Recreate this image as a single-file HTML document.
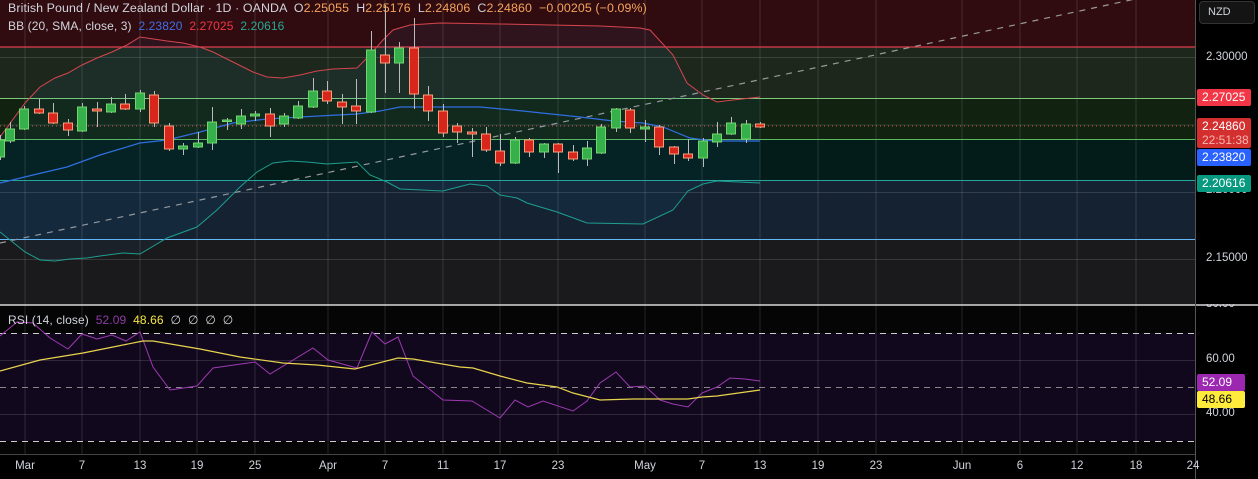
<!DOCTYPE html>
<html><head><meta charset="utf-8"><style>
html,body{margin:0;padding:0;background:#000;width:1258px;height:479px;overflow:hidden;font-family:"Liberation Sans",sans-serif}
svg{position:absolute;left:0;top:0}
.lg{position:absolute;left:8px;font-size:12px;color:#d1d4dc;white-space:nowrap;letter-spacing:0.1px}
.ax{position:absolute;left:1206px;font-size:11.5px;color:#d1d4dc}
.bx{position:absolute;left:1197px;width:54px;font-size:12px;color:#fff;padding-left:5px;box-sizing:border-box;border-radius:2px;line-height:16px;height:17px}
.tm{position:absolute;top:460px;font-size:11.5px;color:#d1d4dc;transform:translateX(-50%)}
</style></head><body>
<svg width="1258" height="479" viewBox="0 0 1258 479">
<rect x="0" y="0" width="1195" height="47" fill="#300c10"/>
<rect x="0" y="47" width="1195" height="51" fill="#1d271c"/>
<rect x="0" y="98" width="1195" height="41" fill="#112211"/>
<rect x="0" y="139" width="1195" height="41" fill="#041c19"/>
<rect x="0" y="180" width="1195" height="59" fill="#152232"/>
<rect x="0" y="239" width="1195" height="66" fill="#1a1a1c"/>
<rect x="0" y="306" width="1195" height="148" fill="#050505"/>
<rect x="0" y="333" width="1195" height="108" fill="#12081e"/>
<g stroke="#ffffff" stroke-opacity="0.13" stroke-width="1">
<line x1="25" y1="0" x2="25" y2="454"/><line x1="82" y1="0" x2="82" y2="454"/><line x1="140" y1="0" x2="140" y2="454"/><line x1="197" y1="0" x2="197" y2="454"/><line x1="255" y1="0" x2="255" y2="454"/><line x1="328" y1="0" x2="328" y2="454"/><line x1="385" y1="0" x2="385" y2="454"/><line x1="443" y1="0" x2="443" y2="454"/><line x1="500" y1="0" x2="500" y2="454"/><line x1="558" y1="0" x2="558" y2="454"/><line x1="645" y1="0" x2="645" y2="454"/><line x1="702" y1="0" x2="702" y2="454"/><line x1="760" y1="0" x2="760" y2="454"/><line x1="818" y1="0" x2="818" y2="454"/><line x1="876" y1="0" x2="876" y2="454"/><line x1="962" y1="0" x2="962" y2="454"/><line x1="1020" y1="0" x2="1020" y2="454"/><line x1="1077" y1="0" x2="1077" y2="454"/><line x1="1136" y1="0" x2="1136" y2="454"/>
<line x1="0" y1="57.5" x2="1195" y2="57.5"/><line x1="0" y1="125" x2="1195" y2="125"/><line x1="0" y1="192.5" x2="1195" y2="192.5"/><line x1="0" y1="259.5" x2="1195" y2="259.5"/>
<line x1="0" y1="360.5" x2="1195" y2="360.5"/><line x1="0" y1="414.5" x2="1195" y2="414.5"/>
</g>
<g stroke="#ccc" stroke-dasharray="6,5" stroke-width="1">
<line x1="0" y1="333.5" x2="1195" y2="333.5"/><line x1="0" y1="441.5" x2="1195" y2="441.5"/>
</g>
<line x1="0" y1="387.5" x2="1195" y2="387.5" stroke="#888" stroke-dasharray="6,5"/>
<line x1="0" y1="47" x2="1195" y2="47" stroke="#e04050" stroke-width="1.2"/>
<line x1="0" y1="98.5" x2="1195" y2="98.5" stroke="#7dc87d" stroke-width="1"/>
<line x1="0" y1="139.5" x2="1195" y2="139.5" stroke="#5cb85c" stroke-width="1"/>
<line x1="0" y1="180.5" x2="1195" y2="180.5" stroke="#26a69a" stroke-width="1"/>
<line x1="0" y1="239.5" x2="1195" y2="239.5" stroke="#64b5f6" stroke-width="1"/>
<line x1="0" y1="126" x2="1195" y2="126" stroke="#e0503a" stroke-dasharray="1,3" stroke-width="1"/>
<line x1="0" y1="243" x2="1140" y2="-2" stroke="#9a9a9a" stroke-dasharray="6,6" stroke-width="1.2"/>
<path d="M0,137 L25,103 40,87 55,78 68,73 82,65 97,58 112,52 127,45 140,37 167,41 183,43 200,47 213,52 233,62 253,72 267,77 283,78 300,75 317,71 333,69 357,68 367,58 383,40 393,30 410,25 440,23 500,24 600,26 640,28 650,30 673,55 687,83 703,95 717,102 733,100 760,97 L760,183 717,181 703,184 688,191 673,210 643,224 587,223 557,212 527,203 517,198 500,195 487,186 470,184 443,191 400,189 387,182 370,175 357,162 327,164 307,162 290,161 273,163 257,172 240,187 217,210 197,227 167,238 140,254 123,253 100,256 87,258 70,259 55,261 40,260 25,252 10,240 0,232 Z" fill="#2196f3" fill-opacity="0.06"/>
<polyline fill="none" stroke="#d6454f" stroke-width="1" points="0,137 25,103 40,87 55,78 68,73 82,65 97,58 112,52 127,45 140,37 167,41 183,43 200,47 213,52 233,62 253,72 267,77 283,78 300,75 317,71 333,69 357,68 367,58 383,40 393,30 410,25 440,23 500,24 600,26 640,28 650,30 673,55 687,83 703,95 717,102 733,100 760,97"/>
<polyline fill="none" stroke="#2f6fe0" stroke-width="1.2" points="0,183 33,175 67,167 100,155 140,143 167,140 200,132 233,123 267,119 300,117 357,114 380,111 400,107 420,107 480,107 513,110 580,117 613,121 643,123 663,127 690,138 713,141 760,141"/>
<polyline fill="none" stroke="#1f9e8e" stroke-width="1" points="0,232 10,240 25,252 40,260 55,261 70,259 87,258 100,256 123,253 140,254 167,238 197,227 217,210 240,187 257,172 273,163 290,161 307,162 327,164 357,162 370,175 387,182 400,189 443,191 470,184 487,186 500,195 517,198 527,203 557,212 587,223 643,224 673,210 688,191 703,184 717,181 760,183"/>
<g stroke="#bbb" stroke-width="1">
<line x1="0.5" y1="135" x2="0.5" y2="160"/><line x1="10.5" y1="122" x2="10.5" y2="143"/><line x1="24.5" y1="106" x2="24.5" y2="130"/><line x1="39.5" y1="99" x2="39.5" y2="114"/><line x1="53.5" y1="103" x2="53.5" y2="124"/><line x1="68.5" y1="119" x2="68.5" y2="136"/><line x1="82.5" y1="103" x2="82.5" y2="132"/><line x1="97.5" y1="102" x2="97.5" y2="127"/><line x1="111.5" y1="97" x2="111.5" y2="113"/><line x1="125.5" y1="94" x2="125.5" y2="110"/><line x1="140.5" y1="90" x2="140.5" y2="112"/><line x1="154.5" y1="91" x2="154.5" y2="127"/><line x1="169.5" y1="123" x2="169.5" y2="151"/><line x1="183.5" y1="143" x2="183.5" y2="155"/><line x1="198.5" y1="132" x2="198.5" y2="148"/><line x1="212.5" y1="107" x2="212.5" y2="150"/><line x1="227.5" y1="118" x2="227.5" y2="130"/><line x1="241.5" y1="109" x2="241.5" y2="129"/><line x1="255.5" y1="111" x2="255.5" y2="121"/><line x1="270.5" y1="108" x2="270.5" y2="137"/><line x1="284.5" y1="113" x2="284.5" y2="127"/><line x1="298.5" y1="101" x2="298.5" y2="119"/><line x1="313.5" y1="78" x2="313.5" y2="108"/><line x1="327.5" y1="81" x2="327.5" y2="104"/><line x1="342.5" y1="94" x2="342.5" y2="124"/><line x1="356.5" y1="79" x2="356.5" y2="124"/><line x1="371.5" y1="31" x2="371.5" y2="113"/><line x1="385.5" y1="5" x2="385.5" y2="93"/><line x1="399.5" y1="42" x2="399.5" y2="93"/><line x1="414.5" y1="18" x2="414.5" y2="109"/><line x1="428.5" y1="86" x2="428.5" y2="121"/><line x1="443.5" y1="104" x2="443.5" y2="137"/><line x1="457.5" y1="123" x2="457.5" y2="143"/><line x1="472.5" y1="128" x2="472.5" y2="157"/><line x1="486.5" y1="127" x2="486.5" y2="152"/><line x1="500.5" y1="134" x2="500.5" y2="166"/><line x1="515.5" y1="137" x2="515.5" y2="164"/><line x1="529.5" y1="138" x2="529.5" y2="157"/><line x1="544.5" y1="143" x2="544.5" y2="158"/><line x1="558.5" y1="143" x2="558.5" y2="173"/><line x1="573.5" y1="145" x2="573.5" y2="161"/><line x1="587.5" y1="141" x2="587.5" y2="166"/><line x1="601.5" y1="124" x2="601.5" y2="154"/><line x1="616.5" y1="108" x2="616.5" y2="132"/><line x1="630.5" y1="108" x2="630.5" y2="133"/><line x1="645.5" y1="120" x2="645.5" y2="142"/><line x1="659.5" y1="125" x2="659.5" y2="155"/><line x1="674.5" y1="146" x2="674.5" y2="164"/><line x1="688.5" y1="139" x2="688.5" y2="161"/><line x1="703.5" y1="138" x2="703.5" y2="167"/><line x1="717.5" y1="122" x2="717.5" y2="147"/><line x1="731.5" y1="117" x2="731.5" y2="135"/><line x1="746.5" y1="120" x2="746.5" y2="143"/><line x1="760.5" y1="122" x2="760.5" y2="128"/>
</g>
<g fill="#36b04a" stroke="#74d46e" stroke-width="1">
<rect x="-4.5" y="140" width="9" height="17"/><rect x="5.5" y="129" width="9" height="12"/><rect x="19.5" y="109" width="9" height="20"/><rect x="77.5" y="107" width="9" height="24"/><rect x="106.5" y="104" width="9" height="8"/><rect x="135.5" y="93" width="9" height="16"/><rect x="178.5" y="146" width="9" height="3"/><rect x="193.5" y="143" width="9" height="4"/><rect x="207.5" y="122" width="9" height="21"/><rect x="222.5" y="120" width="9" height="1.5"/><rect x="236.5" y="116" width="9" height="8"/><rect x="250.5" y="114" width="9" height="2"/><rect x="279.5" y="116" width="9" height="8"/><rect x="293.5" y="106" width="9" height="12"/><rect x="308.5" y="91" width="9" height="16"/><rect x="366.5" y="50" width="9" height="62"/><rect x="394.5" y="48" width="9" height="15"/><rect x="510.5" y="140" width="9" height="23"/><rect x="539.5" y="144" width="9" height="8"/><rect x="582.5" y="148" width="9" height="11"/><rect x="596.5" y="127" width="9" height="26"/><rect x="611.5" y="109" width="9" height="19"/><rect x="640.5" y="127" width="9" height="2"/><rect x="698.5" y="141" width="9" height="17"/><rect x="712.5" y="134" width="9" height="8"/><rect x="726.5" y="123" width="9" height="11"/><rect x="741.5" y="124" width="9" height="15"/>
</g>
<g fill="#d9261c" stroke="#f5a07a" stroke-width="1">
<rect x="34.5" y="109" width="9" height="4"/><rect x="48.5" y="113" width="9" height="10"/><rect x="63.5" y="123" width="9" height="7"/><rect x="92.5" y="109" width="9" height="2"/><rect x="120.5" y="104" width="9" height="5"/><rect x="149.5" y="95" width="9" height="28"/><rect x="164.5" y="126" width="9" height="23"/><rect x="265.5" y="114" width="9" height="12"/><rect x="322.5" y="91" width="9" height="10"/><rect x="337.5" y="102" width="9" height="5"/><rect x="351.5" y="106" width="9" height="5"/><rect x="380.5" y="55" width="9" height="8"/><rect x="409.5" y="48" width="9" height="46"/><rect x="423.5" y="95" width="9" height="16"/><rect x="438.5" y="111" width="9" height="22"/><rect x="452.5" y="126" width="9" height="6"/><rect x="467.5" y="132" width="9" height="2"/><rect x="481.5" y="134" width="9" height="16"/><rect x="495.5" y="151" width="9" height="12"/><rect x="524.5" y="140" width="9" height="12"/><rect x="553.5" y="144" width="9" height="8"/><rect x="568.5" y="152" width="9" height="7"/><rect x="625.5" y="110" width="9" height="18"/><rect x="654.5" y="127" width="9" height="20"/><rect x="669.5" y="147" width="9" height="7"/><rect x="683.5" y="154" width="9" height="4"/><rect x="755.5" y="124" width="9" height="3"/>
</g>
<polyline fill="none" stroke="#9c3ab0" stroke-width="1" points="0,336 17,322 33,323 50,338 68,349 82,334 97,339 112,335 126,341 140,332 153,367 170,390 197,386 213,368 255,362 270,374 313,348 328,360 357,368 372,332 385,344 398,337 413,376 443,400 472,401 500,418 515,400 528,407 543,401 573,411 587,401 600,383 616,372 630,387 645,386 660,400 673,404 688,407 702,393 717,387 730,378 745,379 760,381"/>
<polyline fill="none" stroke="#e8d44d" stroke-width="1.2" points="0,371 40,360 83,353 113,347 143,341 153,341 200,349 240,357 283,363 317,365 355,369 398,358 413,359 460,367 473,368 500,376 527,383 557,387 573,393 600,400 633,399 645,399 688,399 702,397 717,396 760,390"/>
<line x1="0" y1="305" x2="1258" y2="305" stroke="#d8d8d8" stroke-width="1.5"/>
<line x1="0" y1="454.5" x2="1195" y2="454.5" stroke="#444" stroke-width="1"/>
<line x1="1195.5" y1="0" x2="1195.5" y2="479" stroke="#555" stroke-width="1"/>
</svg>
<div class="lg" style="top:1px;font-size:12.4px">British Pound / New Zealand Dollar · 1D · OANDA &nbsp;O<span style="color:#f7a35c">2.25055</span> &nbsp;H<span style="color:#f7a35c">2.25176</span> &nbsp;L<span style="color:#f7a35c">2.24806</span> &nbsp;C<span style="color:#f7a35c">2.24860</span> &nbsp;<span style="color:#f7a35c">−0.00205 (−0.09%)</span></div>
<div class="lg" style="top:19px">BB (20, SMA, close, 3) &nbsp;<span style="color:#3f6fe8">2.23820</span> &nbsp;<span style="color:#f23645">2.27025</span> &nbsp;<span style="color:#22ab94">2.20616</span></div>
<div class="lg" style="top:313px">RSI (14, close) &nbsp;<span style="color:#8e3aa8">52.09</span> &nbsp;<span style="color:#f5e447">48.66</span> &nbsp;∅ &nbsp;∅ &nbsp;∅ &nbsp;∅</div>
<div style="position:absolute;left:1199px;top:1px;width:56px;height:23px;background:#141414;border:1px solid #333;border-radius:4px;box-sizing:border-box;color:#d1d4dc;font-size:11px;line-height:21px;padding-left:8px">NZD</div>
<div class="ax" style="top:51px">2.30000</div>
<div class="ax" style="top:184px">2.20000</div>
<div class="ax" style="top:252px">2.15000</div>
<div class="ax" style="top:298px;clip-path:inset(6px 0 0 0)">80.00</div>
<div class="ax" style="top:353px">60.00</div>
<div class="ax" style="top:407px">40.00</div>
<div class="bx" style="top:89px;background:#f23645">2.27025</div>
<div class="bx" style="top:118px;height:30px;background:#d32f2f;line-height:14px;padding-top:1px">2.24860<br><span style="color:#f7b5b0">22:51:38</span></div>
<div class="bx" style="top:149px;background:#2962ff">2.23820</div>
<div class="bx" style="top:175px;background:#089981">2.20616</div>
<div class="bx" style="top:374px;width:48px;background:#9c27b0">52.09</div>
<div class="bx" style="top:391px;width:48px;background:#ffeb3b;color:#000">48.66</div>
<div class="tm" style="left:25px">Mar</div><div class="tm" style="left:82px">7</div><div class="tm" style="left:140px">13</div><div class="tm" style="left:197px">19</div><div class="tm" style="left:255px">25</div><div class="tm" style="left:328px">Apr</div><div class="tm" style="left:385px">7</div><div class="tm" style="left:443px">11</div><div class="tm" style="left:500px">17</div><div class="tm" style="left:558px">23</div><div class="tm" style="left:645px">May</div><div class="tm" style="left:702px">7</div><div class="tm" style="left:760px">13</div><div class="tm" style="left:818px">19</div><div class="tm" style="left:876px">23</div><div class="tm" style="left:962px">Jun</div><div class="tm" style="left:1020px">6</div><div class="tm" style="left:1077px">12</div><div class="tm" style="left:1136px">18</div><div class="tm" style="left:1193px">24</div>
</body></html>
